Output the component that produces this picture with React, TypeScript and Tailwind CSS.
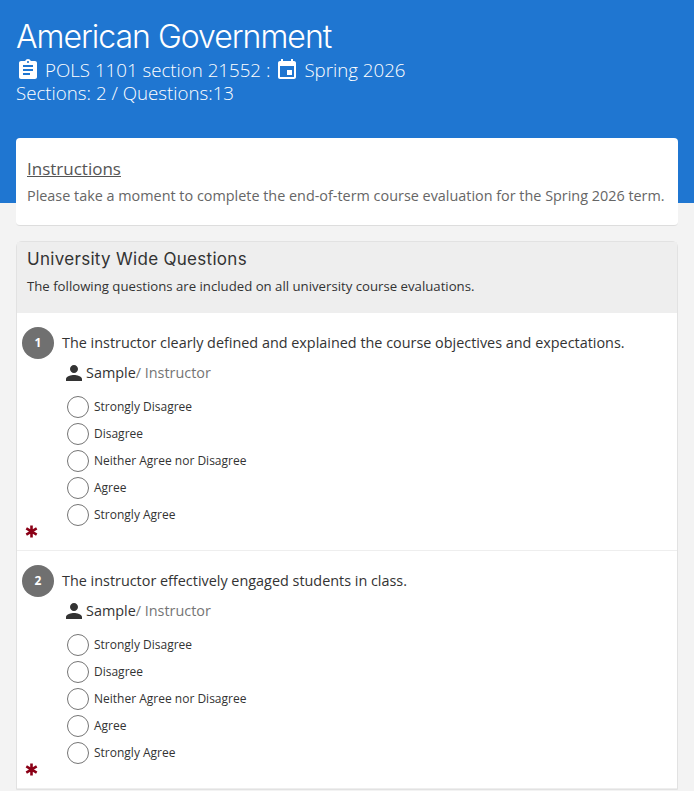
const sans = { fontFamily: '"Open Sans", sans-serif' }

function AssignmentIcon() {
  return (
    <svg viewBox="0 0 24 24" className="w-6 h-6 fill-white shrink-0">
      <path d="M19 3h-4.18C14.4 1.84 13.3 1 12 1c-1.3 0-2.4.84-2.82 2H5c-1.1 0-2 .9-2 2v14c0 1.1.9 2 2 2h14c1.1 0 2-.9 2-2V5c0-1.1-.9-2-2-2zm-7 0c.55 0 1 .45 1 1s-.45 1-1 1-1-.45-1-1 .45-1 1-1zm2 14H7v-2h7v2zm3-4H7v-2h10v2zm0-4H7V7h10v2z" />
    </svg>
  )
}

function EventIcon() {
  return (
    <svg viewBox="0 0 24 24" className="w-6 h-6 fill-white shrink-0">
      <path d="M17 12h-5v5h5v-5zM16 1v2H8V1H6v2H5c-1.11 0-1.99.9-1.99 2L3 19c0 1.1.89 2 2 2h14c1.1 0 2-.9 2-2V5c0-1.1-.9-2-2-2h-1V1h-2zm3 18H5V8h14v11z" />
    </svg>
  )
}

function PersonIcon() {
  return (
    <svg viewBox="0 0 24 24" className="w-6 h-6 fill-[#333333] shrink-0">
      <path d="M12 12c2.21 0 4-1.79 4-4s-1.79-4-4-4-4 1.79-4 4 1.79 4 4 4zm0 2c-2.67 0-8 1.34-8 4v2h16v-2c0-2.66-5.33-4-8-4z" />
    </svg>
  )
}

function RequiredMark() {
  return (
    <svg viewBox="0 0 12 12" className="w-[13px] h-[13px] stroke-[#8b0016] shrink-0" strokeWidth="2.4">
      <path d="M6 0.5v11M1.2 3.2l9.6 5.6M10.8 3.2l-9.6 5.6" />
    </svg>
  )
}

const options = ['Strongly Disagree', 'Disagree', 'Neither Agree nor Disagree', 'Agree', 'Strongly Agree']

function Question({ num, text }: { num: number; text: string }) {
  return (
    <div className="h-[238px] border-b border-[#eeeeee] pt-[14px] pl-[5px]">
      <div className="flex items-center gap-2">
        <div className="w-8 h-8 rounded-full bg-[#707070] text-white text-[12px] font-bold flex items-center justify-center shrink-0">
          {num}
        </div>
        <p className="text-[14.4px] leading-5 text-[#333333]">{text}</p>
      </div>
      <div className="flex items-center ml-[40px] mt-[2px] h-6 text-[14.4px]">
        <PersonIcon />
        <span className="text-[#333333]">Sample</span>
        <span className="text-[#757575]">/ Instructor</span>
      </div>
      <div className="ml-[45px] mt-[11px] flex flex-col gap-[5px]">
        {options.map((o) => (
          <label key={o} className="flex items-center gap-[5px] h-[22px] text-[12px] text-[#333333]">
            <span className="w-[22px] h-[22px] rounded-full border border-[#757575] bg-white shrink-0" />
            {o}
          </label>
        ))}
      </div>
      <div className="ml-[3px] -mt-px">
        <RequiredMark />
      </div>
    </div>
  )
}

export default function App() {
  return (
    <div className="h-[791px] overflow-hidden bg-[#f3f3f3]" style={sans}>
      {/* Header */}
      <header className="h-[203px] bg-[#1f76d1] px-4 pt-[17px] text-white">
        <h1 className="text-[32px] leading-10 font-light tracking-[-1px]" style={{ fontFamily: 'Inter, sans-serif' }}>
          American Government
        </h1>
        <div className="flex items-center h-6 mt-[1px] text-[18.72px] font-light">
          <AssignmentIcon />
          <span className="ml-[5px]">POLS 1101 section 21552 :</span>
          <span className="ml-[5px]"><EventIcon /></span>
          <span className="ml-[5px]">Spring 2026</span>
        </div>
        <div className="text-[18.72px] font-light leading-6 -mt-px">Sections: 2 / Questions:13</div>
      </header>

      <main className="px-4 -mt-[65px]">
        {/* Instructions */}
        <section className="h-[88px] bg-white rounded border-b border-[#dddddd] pt-[21px] px-[11px]">
          <h2 className="text-[17px] leading-5 text-[#555555] underline">Instructions</h2>
          <p className="mt-[7px] text-[14.4px] leading-5 text-[#666666]">
            Please take a moment to complete the end-of-term course evaluation for the Spring 2026 term.
          </p>
        </section>

        {/* Questions */}
        <section className="mt-[15px] bg-white rounded-t-md border border-[#e2e2e2]">
          <div className="h-[71px] bg-[#eeeeee] px-[10px] pt-[5px]">
            <h2 className="text-[17px] leading-6 text-[#333333] tracking-[0.3px]" style={{ fontFamily: 'Inter, sans-serif' }}>
              University Wide Questions
            </h2>
            <p className="mt-[5px] text-[13.2px] leading-5 text-[#333333]">
              The following questions are included on all university course evaluations.
            </p>
          </div>
          <Question num={1} text="The instructor clearly defined and explained the course objectives and expectations." />
          <Question num={2} text="The instructor effectively engaged students in class." />
        </section>
      </main>
    </div>
  )
}
